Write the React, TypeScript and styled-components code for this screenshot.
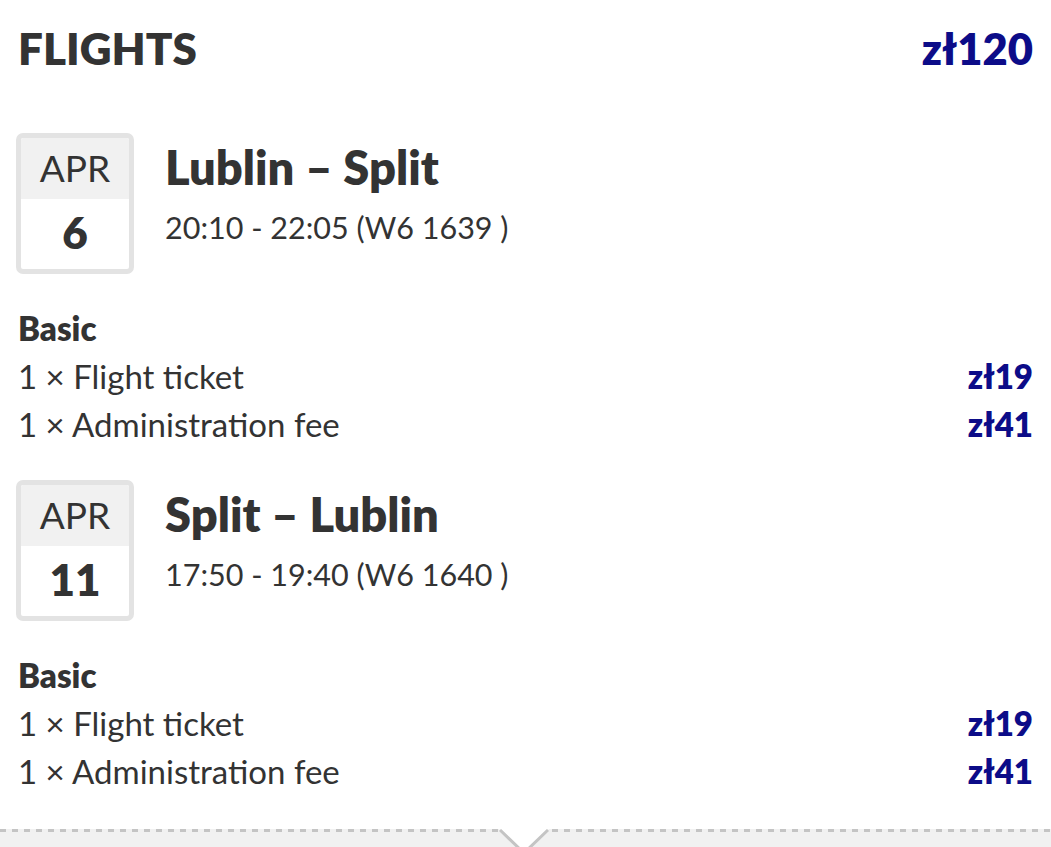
import React from "react";
import styled, { createGlobalStyle } from "styled-components";

const Global = createGlobalStyle`
  html, body { margin: 0; padding: 0; background: #ffffff; }
  body { font-family: "Lato", "Noto Sans", sans-serif; color: #333333; overflow: hidden; }
`;

const Page = styled.div`
  width: 1051px;
  height: 847px;
  display: flex;
  flex-direction: column;
  overflow: hidden;
`;

const Content = styled.div`
  padding: 0 18px;
  display: flex;
  flex-direction: column;
`;

const Header = styled.div`
  display: flex;
  justify-content: space-between;
  align-items: baseline;
  height: 96px;
  padding-top: 22px;
  box-sizing: border-box;
`;

const Title = styled.h1`
  margin: 0;
  font-size: 44px;
  line-height: 50px;
  font-weight: 800;
  color: #333333;
`;

const Price = styled.span<{ $size: number }>`
  font-size: ${(p) => p.$size}px;
  font-weight: 800;
  color: #0c0c88;
`;

const FlightRow = styled.div<{ $first: boolean }>`
  display: flex;
  align-items: flex-start;
  gap: 31px;
  margin-top: ${(p) => (p.$first ? 37 : 32)}px;
`;

const DateBox = styled.div`
  width: 118px;
  height: 141px;
  box-sizing: border-box;
  border: 5px solid #e3e3e3;
  border-radius: 7px;
  display: flex;
  flex-direction: column;
  overflow: hidden;
  margin-left: -2px;
`;

const Month = styled.div`
  height: 61px;
  background: #f1f1f1;
  display: flex;
  align-items: center;
  justify-content: center;
  font-size: 37px;
  color: #333333;
  padding-bottom: 3px;
  box-sizing: border-box;
`;

const Day = styled.div`
  flex: 1;
  display: flex;
  align-items: center;
  justify-content: center;
  font-size: 44px;
  font-weight: 800;
  color: #333333;
  padding-bottom: 4px;
`;

const Info = styled.div`
  display: flex;
  flex-direction: column;
  padding-top: 8px;
`;

const Route = styled.div`
  font-size: 47px;
  line-height: 52px;
  font-weight: 800;
`;

const Times = styled.div`
  font-size: 30.5px;
  line-height: 40px;
  margin-top: 14px;
`;

const Fare = styled.div`
  display: flex;
  flex-direction: column;
  margin-top: 30px;
`;

const FareName = styled.div`
  font-size: 33px;
  line-height: 48px;
  font-weight: 800;
`;

const Line = styled.div`
  display: flex;
  justify-content: space-between;
  align-items: baseline;
  font-size: 33px;
  line-height: 48px;
`;

const Footer = styled.div`
  margin-top: auto;
  position: relative;
  height: 18px;
  background: #f1f1f1;
  &::before {
    content: "";
    position: absolute;
    left: 0;
    right: 0;
    top: 0;
    height: 3px;
    background-image: repeating-linear-gradient(
      to right,
      #c4c4c4 0 6px,
      transparent 6px 12px
    );
  }
`;

const Notch = styled.svg`
  position: absolute;
  left: 499px;
  top: 0;
  width: 50px;
  height: 24px;
`;

type Item = { label: string; price: string };
type Flight = { month: string; day: string; route: string; times: string; items: Item[] };

const flights: Flight[] = [
  {
    month: "APR",
    day: "6",
    route: "Lublin – Split",
    times: "20:10 - 22:05 (W6 1639 )",
    items: [
      { label: "1 × Flight ticket", price: "zł19" },
      { label: "1 × Administration fee", price: "zł41" },
    ],
  },
  {
    month: "APR",
    day: "11",
    route: "Split – Lublin",
    times: "17:50 - 19:40 (W6 1640 )",
    items: [
      { label: "1 × Flight ticket", price: "zł19" },
      { label: "1 × Administration fee", price: "zł41" },
    ],
  },
];

export default function App() {
  return (
    <Page>
      <Global />
      <Content>
        <Header>
          <Title>FLIGHTS</Title>
          <Price $size={43.5}>zł120</Price>
        </Header>
        {flights.map((f, i) => (
          <React.Fragment key={i}>
            <FlightRow $first={i === 0}>
              <DateBox>
                <Month>{f.month}</Month>
                <Day>{f.day}</Day>
              </DateBox>
              <Info>
                <Route>{f.route}</Route>
                <Times>{f.times}</Times>
              </Info>
            </FlightRow>
            <Fare>
              <FareName>Basic</FareName>
              {f.items.map((it, j) => (
                <Line key={j}>
                  <span>{it.label}</span>
                  <Price $size={33}>{it.price}</Price>
                </Line>
              ))}
            </Fare>
          </React.Fragment>
        ))}
      </Content>
      <Footer>
        <Notch viewBox="0 0 50 24">
          <polygon points="0,0 50,0 25,25" fill="#ffffff" />
          <polyline points="1,1 25,24 49,1" fill="none" stroke="#c4c4c4" strokeWidth="3" />
        </Notch>
      </Footer>
    </Page>
  );
}
